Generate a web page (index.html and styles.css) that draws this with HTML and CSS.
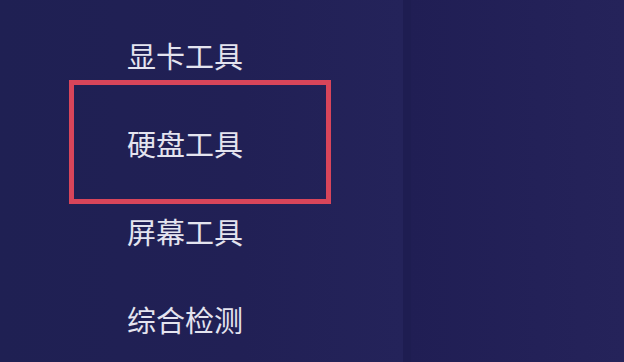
FILE: index.html
```html
<!DOCTYPE html>
<html lang="zh-CN">
<head>
<meta charset="utf-8">
<title>工具菜单</title>
<link rel="stylesheet" href="styles.css">
</head>
<body>
<div class="app">
  <nav class="sidebar">
    <ul class="menu">
      <li class="menu-item">显卡工具</li>
      <li class="menu-item active"><span class="mark"></span>硬盘工具</li>
      <li class="menu-item">屏幕工具</li>
      <li class="menu-item">综合检测</li>
    </ul>
  </nav>
  <div class="divider"></div>
  <main class="content"></main>
</div>
</body>
</html>
```
FILE: styles.css
```css
* { box-sizing: border-box; }
html, body {
  margin: 0;
  padding: 0;
  width: 624px;
  height: 362px;
  overflow: hidden;
  background: #201f55;
  font-family: "Noto Sans CJK SC", "Noto Sans", sans-serif;
}
.app {
  display: flex;
  width: 624px;
  height: 362px;
}
.sidebar {
  width: 403px;
  height: 100%;
  background: linear-gradient(90deg, #1f2053 0%, #212055 60%, #24235a 100%);
}
.divider {
  width: 8px;
  height: 100%;
  background: #1e1d51;
}
.content {
  flex: 1;
  height: 100%;
  background: linear-gradient(90deg, #201e54 0%, #232158 60%, #25235a 100%);
}
.menu {
  list-style: none;
  margin: 0;
  padding: 11px 0 0 127px;
  display: flex;
  flex-direction: column;
}
.menu-item {
  position: relative;
  height: 88px;
  display: flex;
  align-items: center;
  font-size: 29px;
  line-height: 1;
  color: #e4e4ef;
}
.menu-item.active .mark {
  position: absolute;
  left: -58px;
  top: -19px;
  width: 262px;
  height: 124px;
  border: 5px solid #d8455a;
  pointer-events: none;
}
```
